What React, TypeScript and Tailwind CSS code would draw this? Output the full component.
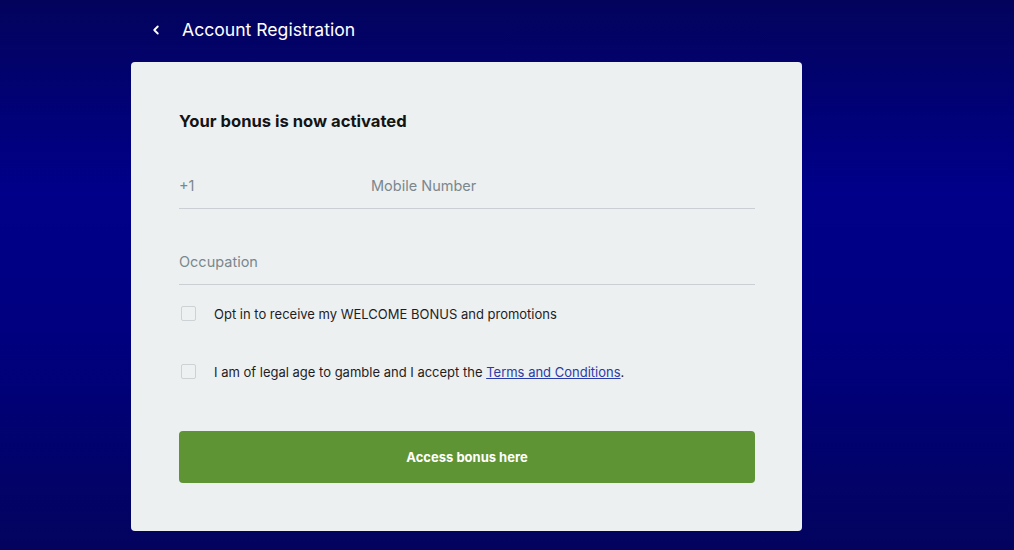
import { ChevronLeft } from "lucide-react"

const font = { fontFamily: "Inter, 'Liberation Sans', sans-serif" }

const Field = ({ children }: { children: React.ReactNode }) => (
    <div className="flex h-[46px] items-center border-b border-[#c9cfd2] pt-[1px] text-[14.5px] text-[#7a878d]">
        {children}
    </div>
)

const Check = ({ children }: { children: React.ReactNode }) => (
    <label className="flex h-[28px] items-center">
        <span className="ml-[2px] h-[15px] w-[15px] rounded-[2px] border border-[#cdd2d5] bg-[#eef1f2]" />
        <span className="ml-[18px] pt-[3px] text-[13px] text-[#1d1d1f]">{children}</span>
    </label>
)

export default function App() {
    return (
        <div
            className="min-h-[550px] w-full bg-[linear-gradient(to_bottom,#03035c_0%,#00008a_35%,#000080_60%,#03035e_100%)]"
            style={font}
        >
            <header className="flex h-[62px] items-center pb-[2px] pl-[149px]">
                <ChevronLeft className="h-[14px] w-[14px] text-white" strokeWidth={3.2} />
                <h1 className="ml-[19px] text-[17.6px] text-white">Account Registration</h1>
            </header>

            <div className="ml-[131px] w-[671px] rounded-[4px] bg-[#edf0f1] pb-[48px] pl-[48px] pr-[47px] pt-[47px]">
                <h2 className="text-[16.6px] font-bold leading-[24px] text-[#141414]">Your bonus is now activated</h2>

                <div className="mt-[30px]">
                    <Field>
                        <span className="w-[192px]">+1</span>
                        <span>Mobile Number</span>
                    </Field>
                </div>
                <div className="mt-[30px]">
                    <Field>
                        <span>Occupation</span>
                    </Field>
                </div>

                <div className="mt-[14px]">
                    <Check>Opt in to receive my WELCOME BONUS and promotions</Check>
                </div>
                <div className="mt-[30px]">
                    <Check>
                        I am of legal age to gamble and I accept the{" "}
                        <a href="#" className="text-[#2a3aa8] underline">Terms and Conditions</a>.
                    </Check>
                </div>

                <button className="mt-[46px] flex h-[52px] w-full items-center justify-center rounded-[4px] bg-[#5f9434] pt-[2px] text-[13px] font-bold text-white">
                    Access bonus here
                </button>
            </div>
        </div>
    )
}
